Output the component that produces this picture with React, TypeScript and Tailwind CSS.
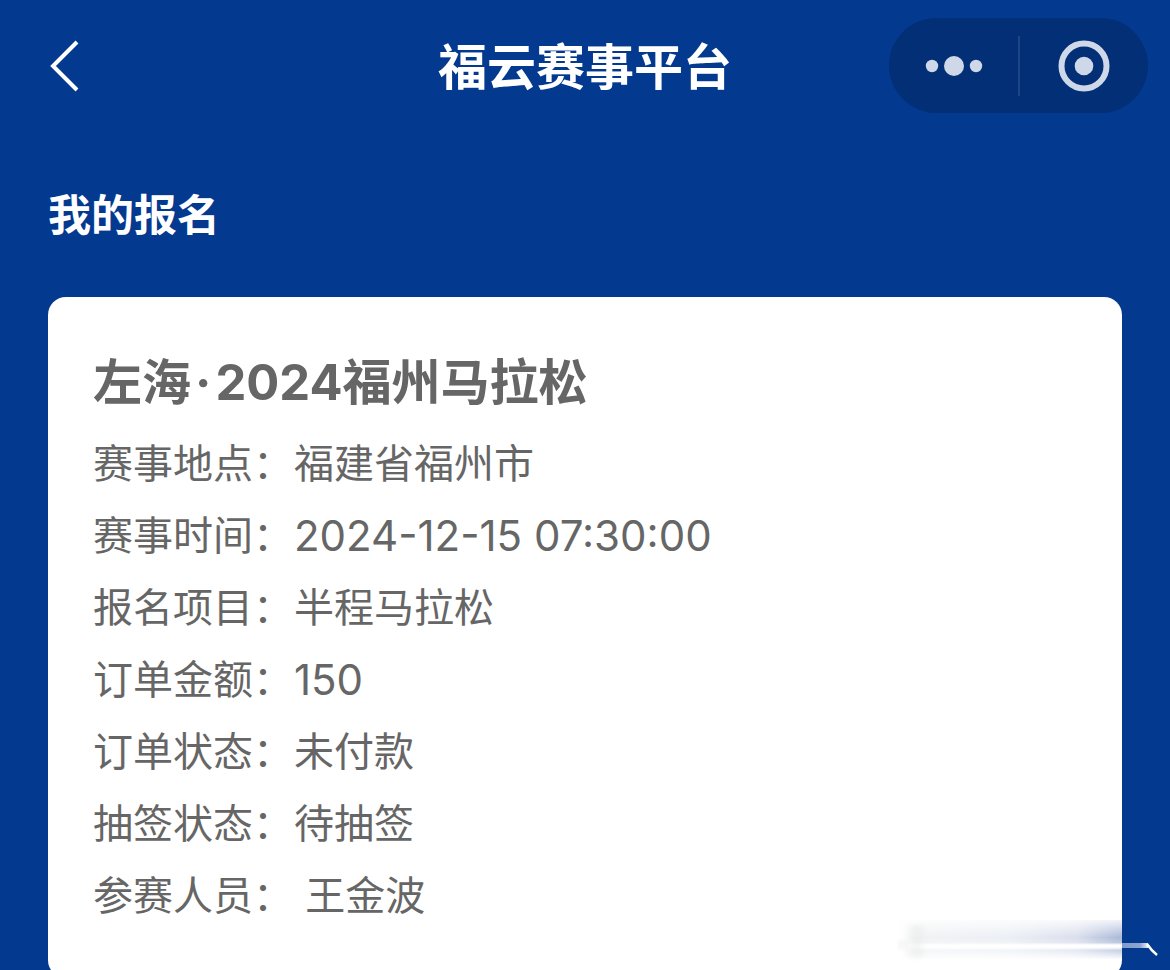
const rows = [
  { label: "赛事地点：", value: "福建省福州市" },
  { label: "赛事时间：", value: "2024-12-15 07:30:00", numeric: true },
  { label: "报名项目：", value: "半程马拉松" },
  { label: "订单金额：", value: "150", numeric: true },
  { label: "订单状态：", value: "未付款" },
  { label: "抽签状态：", value: "待抽签" },
  { label: "参赛人员：", value: "\u00a0王金波" },
];

export default function App() {
  return (
    <div className="relative flex min-h-screen flex-col bg-[#03398f] font-['Inter','Noto_Sans_CJK_SC',sans-serif] text-white">
      <header className="grid grid-cols-[1fr_auto_1fr] items-center px-[22px] pt-[18px]">
        <button type="button" aria-label="返回" className="ml-[26px] w-8">
          <svg viewBox="0 0 32 54" className="h-[54px] w-8" fill="none" stroke="currentColor" strokeWidth="4">
            <path d="M29 3 L5 27 L29 51" />
          </svg>
        </button>
        <h1 className="pt-1 text-[49px] leading-[72px] font-bold">福云赛事平台</h1>
        <div className="flex h-[95px] w-[259px] items-center justify-self-end rounded-full bg-[#032f76] text-[#cfd8e9]">
          <button type="button" aria-label="更多" className="flex flex-1 justify-center">
            <svg viewBox="0 0 60 24" className="h-6 w-[60px]" fill="currentColor">
              <circle cx="9" cy="12" r="6.2" />
              <circle cx="31" cy="12" r="10" />
              <circle cx="53" cy="12" r="6.2" />
            </svg>
          </button>
          <span className="h-[60px] w-[2px] bg-[#1d4585]" />
          <button type="button" aria-label="关闭" className="flex flex-1 justify-center">
            <svg viewBox="0 0 52 52" className="size-[52px]">
              <circle cx="26" cy="26" r="22.5" fill="none" stroke="currentColor" strokeWidth="6" />
              <circle cx="26" cy="26" r="9.3" fill="currentColor" />
            </svg>
          </button>
        </div>
      </header>
      <main className="flex flex-1 flex-col px-12 pt-[70px]">
        <h2 className="text-[43px] leading-[64px] font-bold">我的报名</h2>
        <section className="mt-[50px] flex-1 rounded-[18px] bg-white px-[45px] pt-[50px] pb-[46px] text-[#666666]">
          <h3 className="text-[49px] leading-[72px] font-bold">
            左海<span className="mx-1">·</span>2024福州马拉松
          </h3>
          <dl className="mt-[9px] text-[40px] leading-[72px]">
            {rows.map(({ label, value, numeric }) => (
              <div key={label} className="flex">
                <dt className="w-[201px]">{label}</dt>
                <dd className={numeric ? "text-[42px]" : undefined}>{value}</dd>
              </div>
            ))}
          </dl>
        </section>
      </main>
      <svg
        viewBox="0 0 280 50"
        aria-hidden="true"
        className="absolute top-[915px] right-0 h-[50px] w-[280px]"
      >
        <defs>
          <linearGradient id="haze" x1="0" x2="1" y1="0" y2="0">
            <stop offset="0" stopColor="#f2f4f5" stopOpacity="0" />
            <stop offset="0.1" stopColor="#eff1f3" />
            <stop offset="0.5" stopColor="#e9edf4" />
            <stop offset="0.8" stopColor="#d5dbea" />
            <stop offset="1" stopColor="#9fb0d2" />
          </linearGradient>
          <linearGradient id="fade" x1="0" x2="0" y1="0" y2="1">
            <stop offset="0" stopColor="#fff" stopOpacity="0.85" />
            <stop offset="0.45" stopColor="#fff" stopOpacity="0.1" />
            <stop offset="0.58" stopColor="#fff" stopOpacity="0.3" />
            <stop offset="0.64" stopColor="#fff" stopOpacity="1" />
            <stop offset="0.7" stopColor="#fff" stopOpacity="1" />
            <stop offset="0.78" stopColor="#fff" stopOpacity="0.4" />
            <stop offset="1" stopColor="#fff" stopOpacity="0.95" />
          </linearGradient>
          <linearGradient id="streak" x1="0" x2="1" y1="0" y2="0">
            <stop offset="0" stopColor="#7f9acb" />
            <stop offset="0.7" stopColor="#8ea5d0" />
            <stop offset="1" stopColor="#e8eef8" />
          </linearGradient>
          <filter id="soften" x="-50%" y="-20%" width="200%" height="140%">
            <feGaussianBlur stdDeviation="4 2" />
          </filter>
        </defs>
        <rect x="8" y="5" width="224" height="39" fill="url(#haze)" />
        <rect x="8" y="5" width="224" height="39" fill="url(#fade)" />
        <rect x="20" y="10" width="12" height="33" fill="#e5e7e5" opacity="0.5" filter="url(#soften)" />
        <rect x="10" y="26" width="6" height="8" fill="#dedfde" opacity="0.5" filter="url(#soften)" />
        <rect x="232" y="28" width="26" height="5" fill="url(#streak)" />
        <path d="M257 29 Q261 35 267 40" fill="none" stroke="#fff" strokeWidth="2.5" />
      </svg>
    </div>
  );
}
